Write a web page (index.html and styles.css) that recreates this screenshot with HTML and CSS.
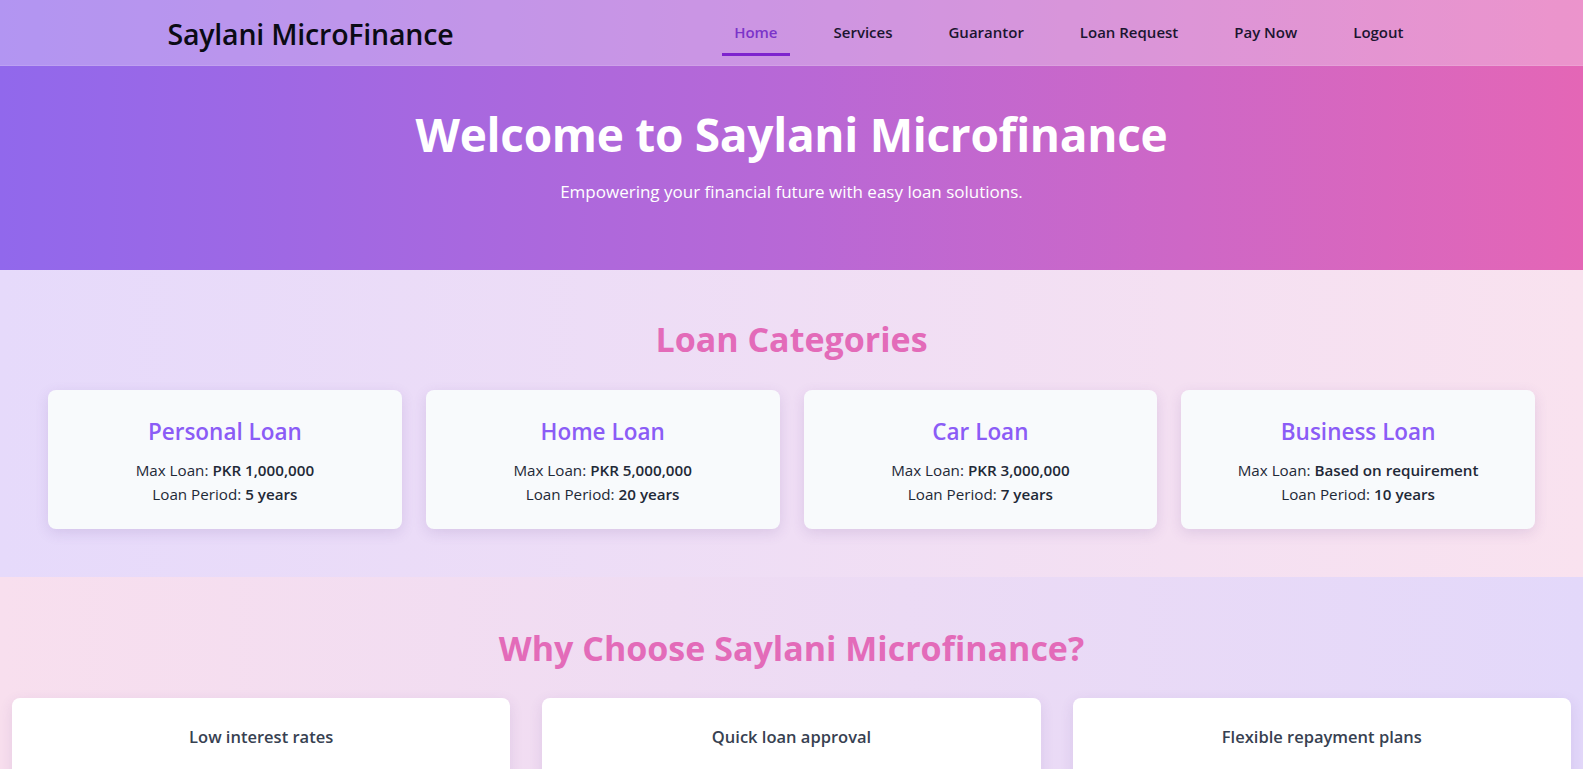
FILE: index.html
```html
<!DOCTYPE html>
<html lang="en">
<head>
<meta charset="utf-8">
<title>Saylani MicroFinance</title>
<link rel="stylesheet" href="styles.css">
</head>
<body>
<div class="top">
  <header class="navbar">
    <div class="nav-inner">
      <div class="logo">Saylani MicroFinance</div>
      <nav class="links">
        <a class="link active" href="#">Home</a>
        <a class="link" href="#">Services</a>
        <a class="link" href="#">Guarantor</a>
        <a class="link" href="#">Loan Request</a>
        <a class="link" href="#">Pay Now</a>
        <a class="link" href="#">Logout</a>
      </nav>
    </div>
  </header>
  <section class="hero">
    <h1 class="hero-title">Welcome to Saylani Microfinance</h1>
    <p class="hero-sub">Empowering your financial future with easy loan solutions.</p>
  </section>
</div>

<section class="loans">
  <h2 class="section-title">Loan Categories</h2>
  <div class="loan-grid">
    <div class="loan-card">
      <h3 class="loan-name">Personal Loan</h3>
      <p class="loan-line">Max Loan: <b>PKR 1,000,000</b></p>
      <p class="loan-line">Loan Period: <b>5 years</b></p>
    </div>
    <div class="loan-card">
      <h3 class="loan-name">Home Loan</h3>
      <p class="loan-line">Max Loan: <b>PKR 5,000,000</b></p>
      <p class="loan-line">Loan Period: <b>20 years</b></p>
    </div>
    <div class="loan-card">
      <h3 class="loan-name">Car Loan</h3>
      <p class="loan-line">Max Loan: <b>PKR 3,000,000</b></p>
      <p class="loan-line">Loan Period: <b>7 years</b></p>
    </div>
    <div class="loan-card">
      <h3 class="loan-name">Business Loan</h3>
      <p class="loan-line">Max Loan: <b>Based on requirement</b></p>
      <p class="loan-line">Loan Period: <b>10 years</b></p>
    </div>
  </div>
</section>

<section class="why">
  <h2 class="section-title">Why Choose Saylani Microfinance?</h2>
  <div class="why-grid">
    <div class="why-card">Low interest rates</div>
    <div class="why-card">Quick loan approval</div>
    <div class="why-card">Flexible repayment plans</div>
  </div>
</section>
</body>
</html>
```

FILE: styles.css
```css
* { box-sizing: border-box; }
html, body { margin: 0; padding: 0; }
body {
  font-family: "Open Sans", "Noto Sans", "Liberation Sans", sans-serif;
  color: #1f2937;
  background: #f3e6f4;
}

.top {
  background: linear-gradient(90deg, #9168ec 0%, #b868d6 50%, #e466b6 100%);
}

.navbar {
  height: 66px;
  background: rgba(255, 255, 255, 0.3);
  border-bottom: 1px solid rgba(255, 255, 255, 0.12);
}
.nav-inner {
  max-width: 1280px;
  height: 100%;
  margin: 0 auto;
  padding: 0 16px;
  display: flex;
  align-items: center;
  justify-content: space-between;
}
.logo {
  font-size: 28.5px;
  font-weight: 600;
  color: #0b0b14;
  letter-spacing: -0.2px;
  padding-top: 2px;
}
.links {
  display: flex;
  align-items: stretch;
  gap: 32px;
  height: 100%;
}
.link {
  display: flex;
  align-items: center;
  padding: 10px 12px 0;
  font-size: 15px;
  font-weight: 600;
  color: #1b1530;
  text-decoration: none;
  border-bottom: 3px solid transparent;
  margin-bottom: 9px;
}
.link.active {
  color: #7b34c9;
  border-bottom-color: #7e22ce;
}

.hero {
  text-align: center;
  padding: 40px 16px 65px;
  color: #fff;
}
.hero-title {
  margin: 0 0 14px;
  font-size: 46px;
  font-weight: 700;
  line-height: 1.25;
  letter-spacing: -0.3px;
}
.hero-sub {
  margin: 0;
  font-size: 17px;
  line-height: 27px;
}

.loans {
  padding: 48px;
  background: linear-gradient(90deg, #e6dafb 0%, #f9e2ef 100%);
}
.section-title {
  margin: 0 0 30px;
  text-align: center;
  font-size: 34px;
  font-weight: 700;
  line-height: 1.25;
  color: #e36bb9;
}
.loan-grid {
  display: grid;
  grid-template-columns: repeat(4, 1fr);
  gap: 24px;
}
.loan-card {
  background: #f8fafc;
  border-radius: 8px;
  padding: 27px 24px 24px;
  text-align: center;
  box-shadow: 0 4px 14px rgba(90, 60, 140, 0.14);
  height: 139px;
}
.loan-name {
  margin: 0 0 11px;
  font-size: 22.5px;
  font-weight: 600;
  line-height: 30px;
  color: #8b5cf6;
}
.loan-line {
  margin: 0;
  font-size: 15.2px;
  line-height: 24px;
  color: #1f2937;
}
.loan-line b { font-weight: 600; }

.why {
  padding: 50px 12px 40px;
  background: linear-gradient(90deg, #f8dfee 0%, #e3d8fa 100%);
}
.why .section-title { margin-bottom: 28px; }
.why-grid {
  display: grid;
  grid-template-columns: repeat(3, 1fr);
  gap: 32px;
}
.why-card {
  background: #ffffff;
  border-radius: 8px;
  padding: 27px 24px 40px;
  text-align: center;
  font-size: 16.5px;
  font-weight: 600;
  color: #374151;
  box-shadow: 0 4px 14px rgba(90, 60, 140, 0.12);
}
```
